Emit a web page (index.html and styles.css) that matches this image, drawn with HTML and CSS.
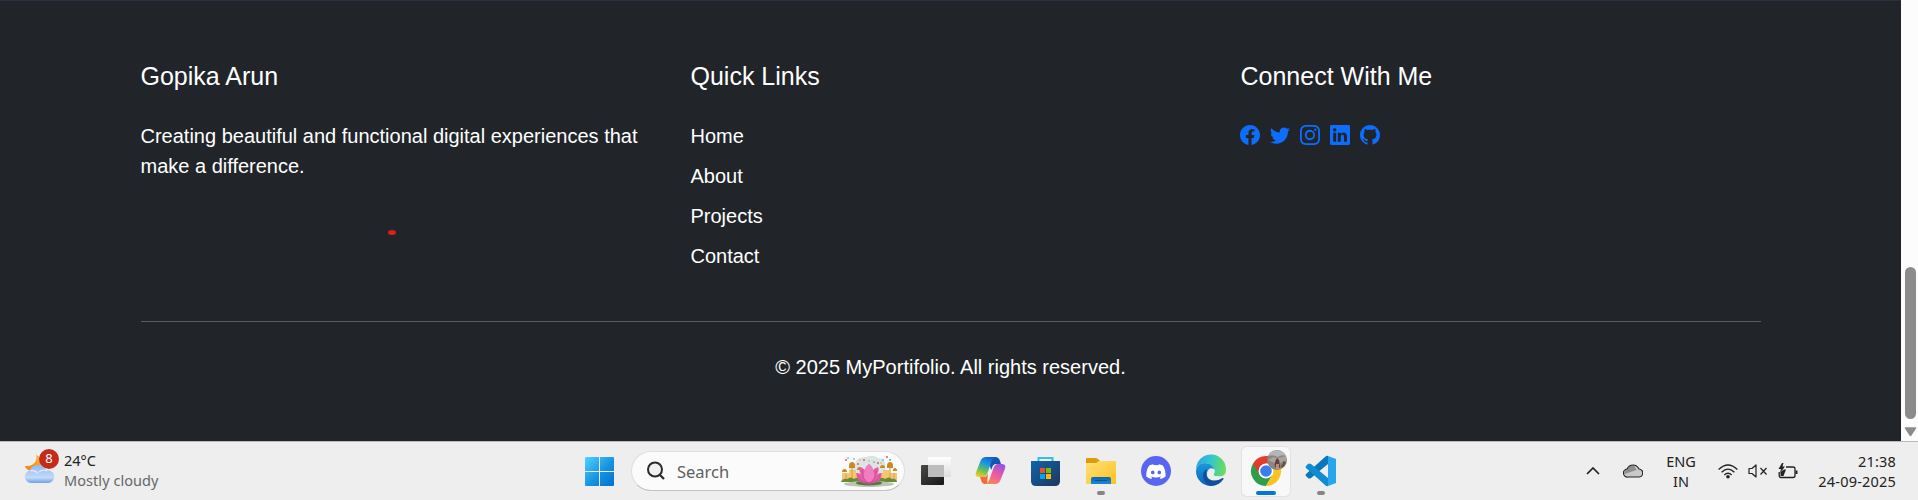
FILE: index.html
```html
<!DOCTYPE html>
<html lang="en">
<head>
<meta charset="utf-8">
<title>MyPortifolio</title>
<link rel="stylesheet" href="styles.css">
</head>
<body>
<div class="viewport">
  <footer class="footer">
    <div class="container">
      <div class="row">
        <div class="col">
          <h5>Gopika Arun</h5>
          <p>Creating beautiful and functional digital experiences that make a difference.</p>
        </div>
        <div class="col">
          <h5>Quick Links</h5>
          <ul class="links">
            <li><a>Home</a></li>
            <li><a>About</a></li>
            <li><a>Projects</a></li>
            <li><a>Contact</a></li>
          </ul>
        </div>
        <div class="col">
          <h5>Connect With Me</h5>
          <div class="social">
            <svg viewBox="0 0 16 16"><path d="M16 8.049c0-4.446-3.582-8.05-8-8.05C3.58 0-.002 3.603-.002 8.05c0 4.017 2.926 7.347 6.75 7.951v-5.625h-2.03V8.05H6.75V6.275c0-2.017 1.195-3.131 3.022-3.131.876 0 1.791.157 1.791.157v1.98h-1.009c-.993 0-1.303.621-1.303 1.258v1.51h2.218l-.354 2.326H9.25V16c3.824-.604 6.75-3.934 6.75-7.951"/></svg>
            <svg viewBox="0 0 16 16"><path d="M5.026 15c6.038 0 9.341-5.003 9.341-9.334q.002-.211-.006-.422A6.7 6.7 0 0 0 16 3.542a6.7 6.7 0 0 1-1.889.518 3.3 3.3 0 0 0 1.447-1.817 6.5 6.5 0 0 1-2.087.793A3.286 3.286 0 0 0 7.875 6.03a9.32 9.32 0 0 1-6.767-3.429 3.29 3.29 0 0 0 1.018 4.382A3.3 3.3 0 0 1 .64 6.575v.045a3.29 3.29 0 0 0 2.632 3.218 3.2 3.2 0 0 1-.865.115 3 3 0 0 1-.614-.057 3.28 3.28 0 0 0 3.067 2.277A6.6 6.6 0 0 1 .78 13.58a6 6 0 0 1-.78-.045A9.34 9.34 0 0 0 5.026 15"/></svg>
            <svg viewBox="0 0 16 16"><path d="M8 0C5.829 0 5.556.01 4.703.048 3.85.088 3.269.222 2.76.42a3.9 3.9 0 0 0-1.417.923A3.9 3.9 0 0 0 .42 2.76C.222 3.268.087 3.85.048 4.7.01 5.555 0 5.827 0 8.001c0 2.172.01 2.444.048 3.297.04.852.174 1.433.372 1.942.205.526.478.972.923 1.417.444.445.89.719 1.416.923.51.198 1.09.333 1.942.372C5.555 15.99 5.827 16 8 16s2.444-.01 3.298-.048c.851-.04 1.434-.174 1.943-.372a3.9 3.9 0 0 0 1.416-.923c.445-.445.718-.891.923-1.417.197-.509.332-1.09.372-1.942C15.99 10.445 16 10.173 16 8s-.01-2.445-.048-3.299c-.04-.851-.175-1.433-.372-1.941a3.9 3.9 0 0 0-.923-1.417A3.9 3.9 0 0 0 13.24.42c-.51-.198-1.092-.333-1.943-.372C10.443.01 10.172 0 7.998 0zm-.717 1.442h.718c2.136 0 2.389.007 3.232.046.78.035 1.204.166 1.486.275.373.145.64.319.92.599s.453.546.598.92c.11.281.24.705.275 1.485.039.843.047 1.096.047 3.231s-.008 2.389-.047 3.232c-.035.78-.166 1.203-.275 1.485a2.5 2.5 0 0 1-.599.919c-.28.28-.546.453-.92.598-.28.11-.704.24-1.485.276-.843.038-1.096.047-3.232.047s-2.39-.009-3.233-.047c-.78-.036-1.203-.166-1.485-.276a2.5 2.5 0 0 1-.92-.598 2.5 2.5 0 0 1-.6-.92c-.109-.281-.24-.705-.275-1.485-.038-.843-.046-1.096-.046-3.233s.008-2.388.046-3.231c.036-.78.166-1.204.276-1.486.145-.373.319-.64.599-.92s.546-.453.92-.598c.282-.11.705-.24 1.485-.276.738-.034 1.024-.044 2.515-.045zm4.988 1.328a.96.96 0 1 0 0 1.92.96.96 0 0 0 0-1.92m-4.27 1.122a4.109 4.109 0 1 0 0 8.217 4.109 4.109 0 0 0 0-8.217m0 1.441a2.667 2.667 0 1 1 0 5.334 2.667 2.667 0 0 1 0-5.334"/></svg>
            <svg viewBox="0 0 16 16"><path d="M0 1.146C0 .513.526 0 1.175 0h13.65C15.474 0 16 .513 16 1.146v13.708c0 .633-.526 1.146-1.175 1.146H1.175C.526 16 0 15.487 0 14.854zm4.943 12.248V6.169H2.542v7.225zm-1.2-8.212c.837 0 1.358-.554 1.358-1.248-.015-.709-.52-1.248-1.342-1.248S2.4 3.226 2.4 3.934c0 .694.521 1.248 1.327 1.248zm4.908 8.212V9.359c0-.216.016-.432.08-.586.173-.431.568-.878 1.232-.878.869 0 1.216.662 1.216 1.634v3.865h2.401V9.25c0-2.22-1.184-3.252-2.764-3.252-1.274 0-1.845.7-2.165 1.193v.025h-.016l.016-.025V6.169h-2.4c.03.678 0 7.225 0 7.225z"/></svg>
            <svg viewBox="0 0 16 16"><path d="M8 0C3.58 0 0 3.58 0 8c0 3.54 2.29 6.53 5.47 7.59.4.07.55-.17.55-.38 0-.19-.01-.82-.01-1.49-2.01.37-2.53-.49-2.69-.94-.09-.23-.48-.94-.82-1.13-.28-.15-.68-.52-.01-.53.63-.01 1.08.58 1.23.82.72 1.21 1.87.87 2.33.66.07-.52.28-.87.51-1.07-1.78-.2-3.64-.89-3.64-3.95 0-.87.31-1.59.82-2.15-.08-.2-.36-1.02.08-2.12 0 0 .67-.21 2.2.82.64-.18 1.32-.27 2-.27s1.36.09 2 .27c1.53-1.04 2.2-.82 2.2-.82.44 1.1.16 1.92.08 2.12.51.56.82 1.27.82 2.15 0 3.07-1.87 3.75-3.65 3.95.29.25.54.73.54 1.48 0 1.07-.01 1.93-.01 2.2 0 .21.15.46.55.38A8.01 8.01 0 0 0 16 8c0-4.42-3.58-8-8-8"/></svg>
          </div>
        </div>
      </div>
      <hr>
      <p class="copyright">© 2025 MyPortifolio. All rights reserved.</p>
    </div>
    <span class="dot"></span>
  </footer>
  <div class="scrollbar">
    <span class="thumb"></span>
    <svg class="arrow" viewBox="0 0 13 10"><path d="M1.500 1h10L6.500 8.500z" fill="#8b8b8b" stroke="#8b8b8b" stroke-width="1.500" stroke-linejoin="round"/></svg>
  </div>
</div>

<div class="taskbar">
  <div class="weather">
    <svg class="weather-icon" viewBox="0 0 34 38">
      <defs><linearGradient id="cl" x1="0" y1="0" x2="0" y2="1"><stop offset="0" stop-color="#8fb8f4"/><stop offset=".7" stop-color="#c3daf9"/><stop offset="1" stop-color="#6f9ee8"/></linearGradient>
      <linearGradient id="mn" x1="0" y1="1" x2="1" y2="0"><stop offset="0" stop-color="#f07c1c"/><stop offset="1" stop-color="#fbb932"/></linearGradient></defs>
      <path d="M12 7c2 5-2 12-11 11 1 4 6 6 11 5l5-6c1-5-1-9-5-10z" fill="url(#mn)"/>
      <path d="M7 35A6.300 6.300 0 0 1 6 22.500Q8 17 13.500 17Q19.500 17 22.500 22.500A6.500 6.300 0 0 1 25 35Z" fill="url(#cl)"/>
      <path d="M6 22.800c4-1 6 0 8 2.500M15 24c3-2.500 6-2 8-1" fill="none" stroke="#dbe9fc" stroke-width="1.300"/>
    </svg>
    <span class="badge">8</span>
    <div class="weather-text"><span class="temp">24°C</span><span class="sky">Mostly cloudy</span></div>
  </div>

  <div class="apps">
    <svg class="start" viewBox="0 0 29 29">
      <defs><linearGradient id="win" gradientUnits="userSpaceOnUse" x1="0" y1="0" x2="29" y2="29"><stop offset="0" stop-color="#50d2ff"/><stop offset=".55" stop-color="#1593e2"/><stop offset="1" stop-color="#0270cf"/></linearGradient></defs>
      <path d="M1 0H14V14H0V1Q0 0 1 0ZM15 0H28Q29 0 29 1V14H15ZM0 15H14V29H1Q0 29 0 28ZM15 15H29V28Q29 29 28 29H15Z" fill="url(#win)"/>
    </svg>
    <div class="search">
      <svg class="lens" viewBox="0 0 20 20"><circle cx="9" cy="8.500" r="7" fill="#f1f1f1" stroke="#2b2b2b" stroke-width="2"/><path d="M13.500 13.500L18 18" stroke="#2b2b2b" stroke-width="2.300"/></svg>
      <span class="search-label">Search</span>
      <svg class="lotus" viewBox="0 0 58 33">
        <path d="M10 18Q7 10 15 9Q17 1 26 2Q33-1 38 3Q47 4 45 12L47 18Z" fill="#dce5e5"/>
        <path d="M2 18h7v-3h7v3h27v-3h6v3h8v9H2z" fill="#f3c673"/>
        <path d="M2 17a2.500 3 0 0 1 5 0M9 11a3 4 0 0 1 6 0v2H9zM17 15a2.500 3 0 0 1 5 0M40 13a2.500 3 0 0 1 5 0M47 11a3 4 0 0 1 6 0v2h-6zM53 16a2 3 0 0 1 4 0z" fill="#c98a24"/>
        <path d="M12 13v14M50 13v14M6 19v7M54 18v8" stroke="#dfa546" stroke-width="1.200"/>
        <path d="M1 27q2-4 6-3q4-3 7 0q4-3 7 1h16q4-4 8-1q4-3 7 0q4-1 5 3z" fill="#6c8a36"/>
        <ellipse cx="29" cy="29" rx="25" ry="3" fill="#bcc4b4"/>
        <ellipse cx="29" cy="28" rx="13" ry="2.500" fill="#587749"/>
        <path d="M29 28.500Q17 29 16 18Q20 18 22 20Q18 16 20 12Q23 13 25 15Q26 11 29 9Q32 11 33 15Q35 13 38 12Q40 16 36 20Q38 18 42 18Q41 29 29 28.500Z" fill="#e65cab"/>
        <path d="M29 28Q21 25 25 15Q26 11 29 9Q32 11 33 15Q37 25 29 28Z" fill="#f17dbd"/>
        <path d="M29 28Q20 27 18 20M29 28Q38 27 40 20M29 28Q22 25 22 15M29 28Q36 25 36 15" fill="none" stroke="#cb3f93" stroke-width=".7"/>
        <g fill="#e5566b"><circle cx="6" cy="5" r="1"/><circle cx="18" cy="9" r="1"/><circle cx="24" cy="5" r="1"/><circle cx="38" cy="8" r="1"/><circle cx="47" cy="2" r="1"/></g>
        <g fill="#35a29a"><circle cx="8" cy="3" r=".8"/><circle cx="14" cy="4" r=".8"/><circle cx="34" cy="7" r=".8"/><circle cx="50" cy="5" r=".9"/><circle cx="43" cy="5" r=".8"/></g>
        <g fill="#f2a33c"><circle cx="20" cy="5" r=".8"/><circle cx="29" cy="6" r=".8"/><circle cx="41" cy="8" r=".8"/></g>
      </svg>
    </div>
    <div class="app views"><svg viewBox="0 0 48 48">
      <defs><linearGradient id="tv" x1="0" y1="0" x2="1" y2="1"><stop offset="0" stop-color="#494947"/><stop offset="1" stop-color="#171715"/></linearGradient><linearGradient id="tw" x1="0" y1="0" x2="0" y2="1"><stop offset="0" stop-color="#fff"/><stop offset="1" stop-color="#ddd"/></linearGradient></defs>
      <rect x="9" y="18" width="23" height="20" rx="1" fill="url(#tv)"/><rect x="16" y="10" width="23" height="20" rx="1" fill="url(#tw)"/><path d="M16 18h16v12H16z" fill="#bdbdbd"/></svg></div>
    <div class="app"><svg viewBox="0 0 48 48">
      <defs><linearGradient id="ca" x1=".6" y1="0" x2=".2" y2="1"><stop offset="0" stop-color="#1264d4"/><stop offset=".35" stop-color="#1b9fdb"/><stop offset=".65" stop-color="#6abf58"/><stop offset="1" stop-color="#f2cb25"/></linearGradient>
      <linearGradient id="cb" x1=".7" y1="0" x2=".2" y2="1"><stop offset="0" stop-color="#9a53df"/><stop offset=".5" stop-color="#ee5b9f"/><stop offset="1" stop-color="#fb8a50"/></linearGradient></defs>
      <path d="M27 10h2q4 0 5 4l1 3h-5q-3 0-4 4l-1 2q-2-6 0-10z" fill="#1553b5"/>
      <path d="M21 37h-2q-3 0-4-4l-1-3h4q3 0 4-4z" fill="#f06a3c"/>
      <path d="M30 10H20Q16 10 14.500 14L10.500 24Q8 30 13 30H17Q20 30 21.500 26L25 16Q26.500 11 30 10Z" fill="url(#ca)"/>
      <path d="M19 37H29Q33 37 34.500 33L38.500 23Q41 17 36 17H32Q29 17 27.500 21L24 31Q22.500 36 19 37Z" fill="url(#cb)"/></svg></div>
    <div class="app"><svg viewBox="0 0 48 48">
      <defs><linearGradient id="st" x1="0" y1="0" x2="1" y2="1"><stop offset="0" stop-color="#0c66ab"/><stop offset="1" stop-color="#21355d"/></linearGradient></defs>
      <path d="M17.500 15v-4h14v4" fill="none" stroke="#2fbdf4" stroke-width="2"/>
      <path d="M10 14h29v20q0 5-5 5H15q-5 0-5-5z" fill="url(#st)"/>
      <path d="M19 21h5v5h-5z" fill="#f25022"/><path d="M25 21h5v5h-5z" fill="#7fba00"/><path d="M19 27h5v5h-5z" fill="#00a4ef"/><path d="M25 27h5v5h-5z" fill="#ffb900"/></svg></div>
    <div class="app"><svg viewBox="0 0 48 48">
      <defs><linearGradient id="fo" x1="0" y1="0" x2="1" y2="1"><stop offset="0" stop-color="#ffe07a"/><stop offset="1" stop-color="#fcc21f"/></linearGradient><linearGradient id="fb" x1="0" y1="0" x2="0" y2="1"><stop offset="0" stop-color="#0d65b0"/><stop offset="1" stop-color="#168ad9"/></linearGradient></defs>
      <path d="M10 12q0-1 1-1h8q2 0 3 1l2 2h14v6H10z" fill="#dc9c0b"/><path d="M10 16h10l3-2h16q1 0 1 1v21q0 1-1 1H11q-1 0-1-1z" fill="url(#fo)"/><path d="M15 37v-5q0-2 2-2h16q2 0 2 2v5z" fill="url(#fb)"/><path d="M19 33.500h12" stroke="#064f91"/></svg><i class="mark"></i></div>
    <div class="app"><svg viewBox="0 0 48 48"><circle cx="25" cy="24" r="15" fill="#5865f2"/><path transform="translate(15.200 14.800) scale(.82)" d="M20.317 4.370a19.800 19.800 0 0 0-4.885-1.515c-.21.375-.444.864-.608 1.250a18.300 18.300 0 0 0-5.487 0C9.160 3.700 8.930 3.230 8.720 2.855A19.700 19.700 0 0 0 3.677 4.370C.533 9.046-.320 13.580.099 18.058a20 20 0 0 0 5.993 3.030c.462-.630.874-1.295 1.226-1.994-.640-.245-1.280-.550-1.872-.892l.372-.292c3.928 1.793 8.180 1.793 12.062 0l.373.292c-.598.343-1.220.645-1.873.892.360.698.772 1.362 1.225 1.993a19.800 19.800 0 0 0 6.002-3.030c.500-5.177-.838-9.674-3.290-13.687zM8.020 15.330c-1.183 0-2.157-1.085-2.157-2.419s.955-2.419 2.157-2.419c1.210 0 2.176 1.095 2.157 2.419 0 1.334-.956 2.419-2.157 2.419zm7.975 0c-1.183 0-2.157-1.085-2.157-2.419s.955-2.419 2.157-2.419c1.210 0 2.176 1.095 2.157 2.419 0 1.334-.946 2.419-2.157 2.419z" fill="#fff"/></svg></div>
    <div class="app"><svg viewBox="0 0 48 48">
      <defs><linearGradient id="ea" x1="0" y1=".3" x2="1" y2=".4"><stop offset="0" stop-color="#2ba7df"/><stop offset=".5" stop-color="#31c7d0"/><stop offset="1" stop-color="#70dc55"/></linearGradient><linearGradient id="eb" x1="0" y1="0" x2="0" y2="1"><stop offset="0" stop-color="#1b99de"/><stop offset="1" stop-color="#0764bb"/></linearGradient></defs>
      <path d="M10 22A15 15 0 0 1 40 23Q40 29.500 33 29.500Q27 29.500 27.500 27Q29.500 25 28 22Q25 15 18 16Q12 17 10 22Z" fill="url(#ea)"/>
      <path d="M10 24Q11 16 19 16Q26 16 28 22Q22 20 21 26Q20 33 28 38Q26 39 24 39A15 15 0 0 1 10 24Z" fill="url(#eb)"/>
      <path d="M21 22Q18.500 29 23 32Q29 35.500 36.500 31Q38 30.500 37.500 32Q33 39 25 39Q17 36 17 28Q17 24 21 22Z" fill="#124f9b"/>
      <path d="M28 22Q22 20 21.800 26Q22.500 30 28 32Q33 33 37 30.500L33 29.500Q27 29.500 27.500 27Q29.500 25 28 22Z" fill="#eee"/></svg></div>
    <div class="app active"><svg viewBox="0 0 48 48">
      <path d="M12 16.500A15 15 0 0 0 25 39L31.500 27.750L25 24Z" fill="#2d9f48"/><path d="M25 39A15 15 0 0 0 38 16.500H25L31.500 27.750Z" fill="#fcc31e"/><path d="M12 16.500L18.500 27.800L25 24V16.500H38A15 15 0 0 0 12 16.500Z" fill="#e33b2e"/>
      <circle cx="25" cy="24" r="7.500" fill="#fff"/><circle cx="25" cy="24" r="5.800" fill="#3b7ded"/>
      <circle cx="36" cy="13" r="10" fill="#8d8580"/><path d="M27 9a10 10 0 0 1 18 0q-5-2-8 1q-5-3-10-1z" fill="#b3b8b6"/><path d="M27 13q5-4 10-2l8-2v5l-9 3z" fill="#aaa39c"/><path d="M34 20q-1-5 2-9q3 2 2.500 6l1 3q-3 2-5.500 0z" fill="#5a443b"/><path d="M35 17h3v5h-3z" fill="#c08c72"/><path d="M40 18q2 0 2-4l3 1q-1 4-4 6z" fill="#705140"/></svg><i class="mark wide"></i></div>
    <div class="app"><svg viewBox="0 0 48 48">
      <path d="M32 9L40 12V36L32 39Z" fill="#27a5ed"/><path d="M32 9V17L15 31Q13 32 12 31L10 29Q9 28 10 27L29 10Q31 8 32 9Z" fill="#0878bd"/><path d="M32 39V31L15 17Q13 16 12 17L10 19Q9 20 10 21L29 38Q31 40 32 39Z" fill="#118bd2"/></svg><i class="mark"></i></div>
  </div>

  <div class="tray">
    <svg class="chev" viewBox="0 0 14 8"><path d="M1 7L7 1L13 7" fill="none" stroke="#222" stroke-width="1.700"/></svg>
    <svg class="cloud" viewBox="0 0 20 14"><path d="M5 13A4 4 0 0 1 4 5Q6 1 10 1Q14 1 16 5A4 4 0 0 1 15.500 13Z" fill="#c9c9c9"/><path d="M1.500 10Q1 6 4.500 5Q7 1 11 1.500L13.500 6Z" fill="#8e8e8e"/><path d="M5 13A4 4 0 0 1 4 5Q6 1 10 1Q14 1 16 5A4 4 0 0 1 15.500 13Z" fill="none" stroke="#222" stroke-width="1.200"/></svg>
    <div class="lang"><span>ENG</span><span>IN</span></div>
    <svg class="wifi" viewBox="0 0 20 15"><g fill="none" stroke="#222" stroke-width="1.300"><path d="M.6 5.500Q10-3.500 19.400 5.500M3.600 8.200Q10 2 16.400 8.200M6.300 10.900Q10 7.500 13.700 10.900"/></g><circle cx="10" cy="12.800" r="1.800" fill="#222"/></svg>
    <svg class="vol" viewBox="0 0 20 14"><path d="M1 4.500H4L8 1V13L4 9.500H1Z" fill="none" stroke="#222" stroke-width="1.200" stroke-linejoin="round"/><path d="M12.500 4L18.500 10.500M18.500 4L12.500 10.500" stroke="#222" stroke-width="1.200"/></svg>
    <svg class="batt" viewBox="0 0 20 16"><path d="M8 4H15Q17 4 17 6V12.500Q17 14.500 15 14.500H3Q1.200 14.500 1.200 12.500V9" fill="none" stroke="#222" stroke-width="1.300"/><path d="M17.500 7.500H19.500V11H17.500Z" fill="#222"/><path d="M2.500 9V13H5.500L8 6.500H6Z" fill="#222"/><path d="M4 0L.5 6H3L2 10L7 3.500H4.500L5.500 0Z" fill="#222"/></svg>
    <div class="clock"><span>21:38</span><span>24-09-2025</span></div>
  </div>
</div>
</body>
</html>
```

FILE: styles.css
```css
* { box-sizing: border-box; }
body {
  margin: 0;
  height: 500px;
  overflow: hidden;
  display: flex;
  flex-direction: column;
  font-family: "Liberation Sans", Arial, sans-serif;
}
.viewport { display: flex; height: 441px; }
.footer {
  position: relative;
  flex: 1;
  padding-top: 60px;
  background: #212529;
  border-top: 1px solid #2b3040;
  color: #fff;
  font-size: 20px;
  line-height: 30px;
}
.container { width: 1650px; margin: 0 auto; padding: 0 15px; }
.row { display: flex; margin: 0 -15px; height: 260px; }
.col { width: 550px; padding: 0 15px; }
h5 { margin: 0 0 30px; font-size: 25px; font-weight: 400; line-height: 30px; }
p { margin: 0; }
.links { list-style: none; margin: 0; padding: 0; }
.links li { margin-bottom: 10px; }
.social { display: flex; gap: 10px; padding-top: 4px; margin-left: -0.6px; }
.social svg { width: 20px; height: 20px; fill: #0d6efd; }
hr { margin: 0 0 30px; border: 0; height: 1px; background: #595c5f; }
.copyright { text-align: center; }
.dot {
  position: absolute;
  left: 388px;
  top: 229px;
  width: 8px;
  height: 5px;
  border-radius: 50%;
  background: #e61c1c;
}
.scrollbar {
  width: 17px;
  background: #fcfcfc;
  display: flex;
  flex-direction: column;
  align-items: center;
  padding: 267px 0 0 2px;
}
.thumb { width: 11px; height: 152px; border-radius: 6px; background: #8b8b8b; }
.arrow { width: 13px; height: 10px; margin-top: 8px; }

.taskbar {
  position: relative;
  height: 59px;
  display: flex;
  background: #eee;
  border-top: 1px solid #b9babb;
  font-family: "Noto Sans", sans-serif;
  font-size: 14.5px;
  line-height: 20px;
  color: #222;
}
.weather { position: relative; display: flex; width: 584px; padding: 5px 0 0 24px; }
.weather-icon { width: 34px; height: 38px; margin-top: 1px; }
.badge {
  position: absolute;
  left: 39px;
  top: 7px;
  width: 20px;
  height: 20px;
  border-radius: 50%;
  background: #c42b1c;
  color: #fff;
  font-size: 13px;
  line-height: 19px;
  text-align: center;
}
.weather-text { display: flex; flex-direction: column; padding: 3px 0 0 6px; }
.sky { color: #666; letter-spacing: 0.06px; }
.apps { display: flex; align-items: flex-start; padding-top: 5px; }
.start { width: 29px; height: 29px; margin: 10px 17px 0 1px; }
.search {
  display: flex;
  align-items: center;
  width: 274px;
  height: 40px;
  margin: 4px 7px 0 0;
  padding-left: 14px;
  background: #fbfbfb;
  border: 1px solid #dedede;
  border-bottom-color: #c3c3c3;
  border-radius: 20px;
}
.lens { width: 20px; height: 20px; }
.search-label { width: 174px; padding: 1px 0 0 11px; font-size: 16.5px; color: #606060; }
.lotus { width: 58px; height: 33px; flex: none; }
.app { position: relative; width: 48px; height: 49px; margin-right: 7px; border-radius: 5px; }
.app svg { display: block; width: 48px; height: 48px; margin-left: -1px; }
.app.views svg { margin-left: 0; }
.app.active { background: #f8f8f8; box-shadow: 0 0 0 1px #e2e2e2; }
.mark {
  position: absolute;
  left: 20px;
  top: 44px;
  width: 8px;
  height: 4px;
  border-radius: 2px;
  background: #858585;
}
.mark.wide { left: 14px; width: 20px; background: #0078d4; }
.tray { display: flex; align-items: center; margin-left: auto; padding-right: 22px; }
.chev { width: 14px; height: 8px; margin-right: 23px; }
.cloud { width: 20px; height: 14px; margin-right: 19px; }
.lang { display: flex; flex-direction: column; align-items: center; width: 38px; margin-right: 18px; }
.lang, .clock { padding-bottom: 1px; }
.wifi { width: 20px; height: 15px; margin-right: 10px; }
.vol { width: 20px; height: 14px; margin-right: 10px; }
.batt { width: 20px; height: 16px; margin-right: 19px; }
.clock { display: flex; flex-direction: column; align-items: flex-end; width: 79px; letter-spacing: 0.2px; }
```
